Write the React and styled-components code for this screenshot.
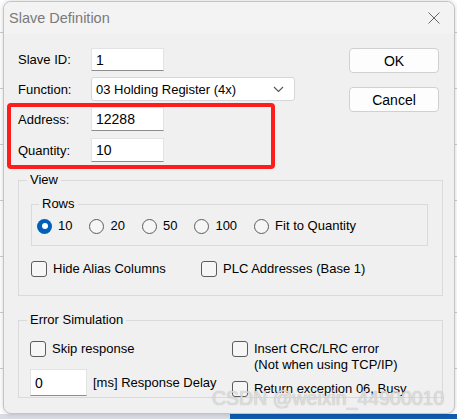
import React from "react";
import styled, { createGlobalStyle } from "styled-components";

const Global = createGlobalStyle`
  html, body { margin: 0; padding: 0; }
  body {
    width: 457px;
    height: 419px;
    overflow: hidden;
    background-color: #fff;
    background-image: repeating-linear-gradient(to bottom, transparent 0, transparent 32px, #cfcfcf 32px, #cfcfcf 33px, transparent 33px, transparent 56px);
    font-family: "Liberation Sans", Arial, sans-serif;
    font-size: 13px;
    color: #000;
  }
`;

const Window = styled.div`
  position: relative;
  width: 452px;
  height: 413px;
  margin: 1px 0 0 3px;
  box-sizing: border-box;
  border: 1px solid #c4c4c4;
  border-radius: 8px;
  background: #f0f0f0;
  box-shadow: 0 0 5px rgba(0, 0, 0, 0.18);
  overflow: hidden;
  display: flex;
  flex-direction: column;
`;

const TitleBar = styled.div`
  height: 32px;
  display: flex;
  align-items: center;
  justify-content: space-between;
  padding: 0 14px 0 5px;
  background: #f3f3f3;
`;

const Title = styled.span`
  font-size: 14.5px;
  color: #7a7a7a;
`;

const Body = styled.div`
  flex: 1;
  padding: 14px 11px 0 3px;
  display: flex;
  flex-direction: column;
`;

const TopSection = styled.div`
  display: flex;
  justify-content: space-between;
`;

const Fields = styled.div`
  display: flex;
  flex-direction: column;
`;

const FieldRow = styled.div`
  display: flex;
  align-items: center;
  padding-left: ${(p) => p.$indent || 11}px;
  margin-bottom: ${(p) => p.$gap || 0}px;
`;

const Label = styled.span`
  width: 73px;
  flex: none;
`;

const TextInput = styled.input`
  width: ${(p) => p.$w || 73}px;
  height: ${(p) => p.$h || 23}px;
  box-sizing: border-box;
  border: 1px solid #e3e3e3;
  border-bottom-color: #8d8d8d;
  background: #fff;
  font: inherit;
  font-size: 14px;
  padding: 0 4px;
  outline: none;
  color: #000;
`;

const Dropdown = styled.div`
  width: 204px;
  height: 24px;
  box-sizing: border-box;
  border: 1px solid #d6d6d6;
  border-radius: 3px;
  background: #fff;
  display: flex;
  align-items: center;
  justify-content: space-between;
  padding: 0 10px 0 4px;
`;

const Highlight = styled.div`
  width: 268px;
  box-sizing: border-box;
  border: 4px solid #ff1c1c;
  border-radius: 4px;
  padding: 0 0 3px;
  margin-top: 2px;
  display: flex;
  flex-direction: column;
  gap: 7px;
`;

const Buttons = styled.div`
  display: flex;
  flex-direction: column;
  gap: 14px;
  margin-right: 4px;
`;

const Button = styled.button`
  width: 90px;
  height: 25px;
  box-sizing: border-box;
  border: 1px solid #d0d0d0;
  border-radius: 4px;
  background: #fdfdfd;
  font: inherit;
  font-size: 14px;
  color: #000;
  padding: 0;
`;

const Group = styled.fieldset`
  margin: ${(p) => p.$mt || 0}px ${(p) => p.$mr || 0}px 0 ${(p) => p.$ml || 0}px;
  padding: 0;
  border: 1px solid #dadada;
  min-width: 0;
`;

const Legend = styled.legend`
  margin-left: ${(p) => p.$ml || 8}px;
  padding: 0 3px;
  line-height: 14px;
`;

const GroupInner = styled.div`
  padding: ${(p) => p.$pad};
`;

const RadioRow = styled.div`
  display: flex;
  align-items: center;
  gap: 17px;
`;

const Option = styled.label`
  display: flex;
  align-items: center;
  gap: 6px;
  line-height: 16px;
  white-space: nowrap;
`;

const Radio = styled.span`
  width: 15px;
  height: 15px;
  box-sizing: border-box;
  border-radius: 50%;
  flex: none;
  border: ${(p) => (p.$on ? "none" : "1px solid #5c5c5c")};
  background: ${(p) => (p.$on ? "#005fb8" : "#f6f6f6")};
  display: flex;
  align-items: center;
  justify-content: center;
  &::after {
    content: "";
    display: ${(p) => (p.$on ? "block" : "none")};
    width: 6px;
    height: 6px;
    border-radius: 50%;
    background: #fff;
  }
`;

const Check = styled.span`
  width: 16px;
  height: 16px;
  box-sizing: border-box;
  border: 1px solid #5c5c5c;
  border-radius: 3px;
  background: #f6f6f6;
  flex: none;
`;

const CheckRow = styled.div`
  display: grid;
  grid-template-columns: ${(p) => p.$cols};
  align-items: start;
  margin-top: ${(p) => p.$mt || 0}px;
`;

const Column = styled.div`
  display: flex;
  flex-direction: column;
  gap: ${(p) => p.$gap}px;
`;

const Note = styled.div`
  padding-left: 22px;
  line-height: 15px;
`;

const Watermark = styled.div`
  position: absolute;
  left: 208px;
  top: 385px;
  font-size: 19.5px;
  color: rgba(226, 226, 226, 0.9);
  text-shadow: 0 0 1px rgba(120, 120, 120, 0.55);
  white-space: nowrap;
  pointer-events: none;
`;

const Backdrop = styled.div`
  display: flex;
  height: 5px;
`;

const BackPart = styled.div`
  flex: ${(p) => p.$flex};
  background: ${(p) => p.$bg};
`;

const Chevron = () => (
  <svg width="11" height="7" viewBox="0 0 11 7">
    <path d="M1 1l4.5 4.5L10 1" fill="none" stroke="#555" strokeWidth="1.1" />
  </svg>
);

const CloseIcon = () => (
  <svg width="12" height="12" viewBox="0 0 12 12">
    <path d="M0.5 0.5l11 11M11.5 0.5l-11 11" stroke="#666" strokeWidth="1" />
  </svg>
);

export default function App() {
  return (
    <>
      <Global />
      <Window>
        <TitleBar>
          <Title>Slave Definition</Title>
          <CloseIcon />
        </TitleBar>
        <Body>
          <TopSection>
            <Fields>
              <FieldRow $gap={6}>
                <Label>Slave ID:</Label>
                <TextInput readOnly value="1" />
              </FieldRow>
              <FieldRow>
                <Label>Function:</Label>
                <Dropdown>
                  <span>03 Holding Register (4x)</span>
                  <Chevron />
                </Dropdown>
              </FieldRow>
              <Highlight>
                <FieldRow $indent={7}>
                  <Label>Address:</Label>
                  <TextInput readOnly value="12288" $h={24} />
                </FieldRow>
                <FieldRow $indent={7}>
                  <Label>Quantity:</Label>
                  <TextInput readOnly value="10" $h={24} />
                </FieldRow>
              </Highlight>
            </Fields>
            <Buttons>
              <Button>OK</Button>
              <Button>Cancel</Button>
            </Buttons>
          </TopSection>

          <Group $mt={4} $ml={11}>
            <Legend>View</Legend>
            <GroupInner $pad="10px 14px 18px 12px">
              <Group>
                <Legend $ml={7}>Rows</Legend>
                <GroupInner $pad="7px 0 11px 5px">
                  <RadioRow>
                    <Option><Radio $on />10</Option>
                    <Option><Radio />20</Option>
                    <Option><Radio />50</Option>
                    <Option><Radio />100</Option>
                    <Option><Radio />Fit to Quantity</Option>
                  </RadioRow>
                </GroupInner>
              </Group>
              <CheckRow $cols="170px 1fr" $mt={15}>
                <Option><Check />Hide Alias Columns</Option>
                <Option><Check />PLC Addresses (Base 1)</Option>
              </CheckRow>
            </GroupInner>
          </Group>

          <Group $mt={17} $ml={11}>
            <Legend>Error Simulation</Legend>
            <GroupInner $pad="14px 0 0 11px">
              <CheckRow $cols="202px 1fr">
                <Column $gap={12}>
                  <Option><Check />Skip response</Option>
                  <Option>
                    <TextInput readOnly value="0" $w={57} $h={27} />
                    [ms] Response Delay
                  </Option>
                </Column>
                <Column $gap={9}>
                  <div>
                    <Option><Check />Insert CRC/LRC error</Option>
                    <Note>(Not when using TCP/IP)</Note>
                  </div>
                  <Option><Check />Return exception 06, Busy</Option>
                </Column>
              </CheckRow>
            </GroupInner>
          </Group>
        </Body>
        <Watermark>CSDN @weixin_44900010</Watermark>
      </Window>
      <Backdrop>
        <BackPart $flex="0 0 230px" $bg="#d9dde3" />
        <BackPart $flex="1" $bg="#0f5cb0" />
      </Backdrop>
    </>
  );
}
